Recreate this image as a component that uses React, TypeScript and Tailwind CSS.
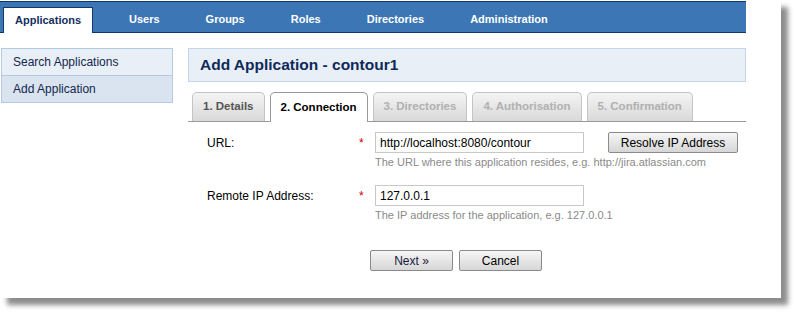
import React from "react";

const navItems = ["Users", "Groups", "Roles", "Directories", "Administration"];

export default function App() {
  return (
    <div
      className="w-[796px] h-[314px] bg-white overflow-hidden"
      style={{ fontFamily: '"Liberation Sans", Arial, sans-serif' }}
    >
      <div className="w-[781px] h-[298px] bg-white shadow-[7px_7px_5px_rgba(0,0,0,0.45)] pt-px">
        {/* Top nav */}
        <div className="w-[746px] h-[32px] bg-[#3c76b4] border-t border-b border-[#12356a] flex items-end">
          <div className="ml-[3px] -mb-px h-[26px] px-[11px] bg-white border-t border-l border-r border-[#12356a] flex items-center text-[11px] font-bold text-[#12305e]">
            Applications
          </div>
          <div className="flex items-center h-[26px] text-[11px] font-bold text-white">
            {navItems.map((n, i) => (
              <span key={n} className={i === 0 ? "ml-[36px]" : "ml-[46px]"}>
                {n}
              </span>
            ))}
          </div>
        </div>

        <div className="flex items-start mt-[15px]">
          {/* Sidebar */}
          <div className="ml-px w-[172px] border border-[#b5cbe3] text-[12px] text-[#14264e]">
            <div className="h-[27px] bg-[#e9eff7] border-b border-[#b5cbe3] flex items-center pl-[11px]">
              Search Applications
            </div>
            <div className="h-[26px] bg-[#d9e4f0] flex items-center pl-[11px]">Add Application</div>
          </div>

          {/* Main */}
          <div className="ml-[15px] w-[558px]">
            <div className="h-[34px] bg-[#e9eff7] border border-[#c3d5ea] flex items-center pl-[11px] text-[15.5px] font-bold text-[#0e2a5a]">
              Add Application - contour1
            </div>

            {/* Wizard tabs */}
            <div className="mt-[10px] flex items-end gap-[5px] pl-[4px] border-b border-[#999999] h-[30px] text-[11.5px] font-bold">
              <div className="h-[29px] px-[10px] flex items-center rounded-t-[5px] border border-b-0 border-[#c4c4c4] bg-gradient-to-b from-[#f4f4f4] to-[#d9d9d9] text-[#555555]">
                1. Details
              </div>
              <div className="h-[30px] -mb-px px-[10px] flex items-center rounded-t-[5px] border border-b-0 border-[#999999] bg-white text-black">
                2. Connection
              </div>
              <div className="h-[29px] px-[10px] flex items-center rounded-t-[5px] border border-b-0 border-[#c4c4c4] bg-gradient-to-b from-[#f4f4f4] to-[#d9d9d9] text-[#b0b0b0]">
                3. Directories
              </div>
              <div className="h-[29px] px-[10px] flex items-center rounded-t-[5px] border border-b-0 border-[#c4c4c4] bg-gradient-to-b from-[#f4f4f4] to-[#d9d9d9] text-[#b0b0b0]">
                4. Authorisation
              </div>
              <div className="h-[29px] px-[10px] flex items-center rounded-t-[5px] border border-b-0 border-[#c4c4c4] bg-gradient-to-b from-[#f4f4f4] to-[#d9d9d9] text-[#b0b0b0]">
                5. Confirmation
              </div>
            </div>

            {/* Form */}
            <div className="pl-[19px] pt-[10px] text-[12px] text-black">
              <div className="flex items-start">
                <div className="w-[152px] h-[21px] flex items-center">URL:</div>
                <div className="w-[16px] h-[21px] flex items-center text-[#d40000]">*</div>
                <div>
                  <div className="flex items-center">
                    <div className="w-[209px] h-[21px] border border-[#c8c8c8] flex items-center pl-[4px]">
                      http://localhost:8080/contour
                    </div>
                    <button className="ml-[24px] w-[130px] h-[21px] border border-[#8a8a8a] rounded-[2px] bg-gradient-to-b from-[#f6f6f6] to-[#d6d6d6] text-[12px] text-black flex items-center justify-center">
                      Resolve IP Address
                    </button>
                  </div>
                  <div className="mt-[3px] text-[11px] leading-[13px] text-[#8a8a8a]">
                    The URL where this application resides, e.g. http://jira.atlassian.com
                  </div>
                </div>
              </div>

              <div className="flex items-start mt-[16px]">
                <div className="w-[152px] h-[21px] flex items-center">Remote IP Address:</div>
                <div className="w-[16px] h-[21px] flex items-center text-[#d40000]">*</div>
                <div>
                  <div className="w-[209px] h-[21px] border border-[#c8c8c8] flex items-center pl-[4px]">
                    127.0.0.1
                  </div>
                  <div className="mt-[3px] text-[11px] leading-[13px] text-[#8a8a8a]">
                    The IP address for the application, e.g. 127.0.0.1
                  </div>
                </div>
              </div>

              <div className="flex ml-[163px] mt-[28px] gap-[6px]">
                <button className="w-[83px] h-[21px] border border-[#8a8a8a] rounded-[2px] bg-gradient-to-b from-[#f6f6f6] to-[#d6d6d6] text-[12px] text-[#1a1a3a] flex items-center justify-center">
                  Next »
                </button>
                <button className="w-[83px] h-[21px] border border-[#8a8a8a] rounded-[2px] bg-gradient-to-b from-[#f6f6f6] to-[#d6d6d6] text-[12px] text-black flex items-center justify-center">
                  Cancel
                </button>
              </div>
            </div>
          </div>
        </div>
      </div>
    </div>
  );
}
